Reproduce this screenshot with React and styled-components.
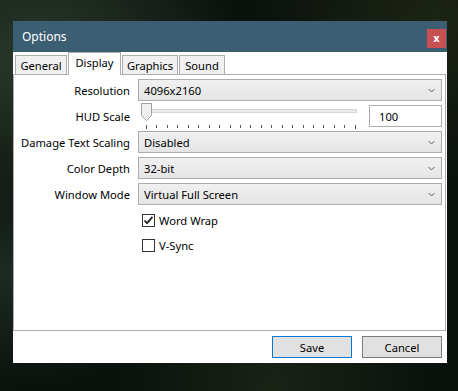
import styled, { createGlobalStyle } from 'styled-components'

const GlobalStyle = createGlobalStyle`
  body {
    margin: 0;
    font-family: 'Noto Sans', 'Open Sans', sans-serif;
    font-size: 11.2px;
    color: #000;
  }
`

const Page = styled.div`
  width: 458px;
  height: 391px;
  box-sizing: border-box;
  padding: 21px 0 0 13px;
  overflow: hidden;
  background:
    radial-gradient(ellipse at 8% 15%, #2b3a2c 0%, transparent 35%),
    radial-gradient(ellipse at 95% 5%, #1c2414 0%, transparent 30%),
    radial-gradient(ellipse at 60% 100%, #1a2316 0%, transparent 40%),
    radial-gradient(ellipse at 0% 70%, #1e2a24 0%, transparent 30%),
    #0b110d;
`

const Dialog = styled.div`
  width: 434px;
  height: 342px;
  background: #fff;
  display: flex;
  flex-direction: column;
`

const TitleBar = styled.div`
  height: 31px;
  flex: none;
  background: #3b5e72;
  display: flex;
  align-items: center;
  justify-content: space-between;
  padding: 0 1px 0 9px;
`

const Title = styled.span`
  color: #fff;
  font-size: 12px;
`

const CloseButton = styled.div`
  width: 19px;
  height: 19px;
  margin-top: 4px;
  background: #c75050;
  color: #fff;
  font-family: 'DejaVu Sans', sans-serif;
  font-weight: bold;
  font-size: 10px;
  display: flex;
  align-items: center;
  justify-content: center;
`

const TabRow = styled.div`
  height: 23px;
  flex: none;
  display: flex;
  align-items: flex-end;
  padding-left: 2px;
  margin-bottom: -1px;
  position: relative;
  z-index: 1;
`

const Tab = styled.div`
  box-sizing: border-box;
  width: ${p => p.$w}px;
  height: ${p => (p.$active ? 23 : 19)}px;
  margin-bottom: ${p => (p.$active ? 0 : 1)}px;
  margin-right: 1px;
  border: 1px solid #adadad;
  border-bottom: none;
  background: ${p => (p.$active ? '#fff' : '#f0f0f0')};
  display: flex;
  align-items: ${p => (p.$active ? 'flex-start' : 'center')};
  padding-top: ${p => (p.$active ? 2 : 0)}px;
  justify-content: center;
`

const Panel = styled.div`
  flex: 1;
  border: 1px solid #adadad;
  margin-right: 1px;
  padding-top: 4px;
`

const Form = styled.div`
  display: grid;
  grid-template-columns: 116px 304px;
  grid-auto-rows: 22px;
  column-gap: 8px;
  row-gap: 4px;
`

const Label = styled.div`
  display: flex;
  align-items: center;
  justify-content: flex-end;
  white-space: nowrap;
`

const Select = styled.div`
  box-sizing: border-box;
  height: 22px;
  border: 1px solid #acacac;
  background: linear-gradient(#f0f0f0, #e5e5e5);
  display: flex;
  align-items: center;
  justify-content: space-between;
  padding: 0 6px 0 5px;
`

const SliderRow = styled.div`
  display: flex;
  align-items: flex-start;
  justify-content: space-between;
`

const Slider = styled.div`
  position: relative;
  width: 219px;
  height: 22px;
`

const Track = styled.div`
  margin: 4px 0 0 3px;
  height: 2px;
  border: 1px solid #d6d6d6;
  background: #e7eae9;
`

const Ticks = styled.div`
  display: flex;
  justify-content: space-between;
  margin: 12px 0 0 8px;
  padding-right: 1px;
`

const Tick = styled.div`
  width: 1px;
  height: ${p => (p.$long ? 4 : 3)}px;
  background: #555;
`

const Thumb = styled.svg`
  position: absolute;
  left: 3px;
  top: -2px;
`

const NumberBox = styled.div`
  box-sizing: border-box;
  width: 73px;
  height: 22px;
  border: 1px solid #adadad;
  background: #fff;
  display: flex;
  align-items: center;
  padding-left: 9px;
`

const CheckList = styled.div`
  grid-column: 2;
  display: flex;
  flex-direction: column;
  gap: 3px;
`

const CheckRow = styled.div`
  flex: none;
  height: 22px;
  display: flex;
  align-items: center;
  gap: 4px;
  padding-left: 4px;
`

const Box = styled.div`
  box-sizing: border-box;
  width: 13px;
  height: 13px;
  border: 1px solid #333;
  background: #fff;
  display: flex;
  align-items: center;
  justify-content: center;
`

const Footer = styled.div`
  height: 32px;
  flex: none;
  box-sizing: border-box;
  display: flex;
  justify-content: flex-end;
  align-items: flex-start;
  gap: 10px;
  padding: 5px 5px 0 0;
`

const Button = styled.div`
  box-sizing: border-box;
  width: 80px;
  height: 22px;
  background: #e1e1e1;
  border: 1px solid ${p => (p.$primary ? '#0078d7' : '#7a7a7a')};
  display: flex;
  align-items: center;
  justify-content: center;
`

function Chevron() {
  return (
    <svg width="7" height="5" viewBox="0 0 7 5">
      <path d="M0.5 1 L3.5 4 L6.5 1" fill="none" stroke="#606060" strokeWidth="1" />
    </svg>
  )
}

function Check() {
  return (
    <svg width="11" height="11" viewBox="0 0 11 11">
      <path d="M1.5 5.5 L4 8.2 L9.5 1.8" fill="none" stroke="#222" strokeWidth="1.8" />
    </svg>
  )
}

const selects = [
  ['Resolution', '4096x2160'],
  null,
  ['Damage Text Scaling', 'Disabled'],
  ['Color Depth', '32-bit'],
  ['Window Mode', 'Virtual Full Screen'],
]

export default function App() {
  return (
    <Page>
      <GlobalStyle />
      <Dialog>
        <TitleBar>
          <Title>Options</Title>
          <CloseButton>x</CloseButton>
        </TitleBar>
        <TabRow>
          <Tab $w={52}>General</Tab>
          <Tab $w={53} $active>Display</Tab>
          <Tab $w={56}>Graphics</Tab>
          <Tab $w={46}>Sound</Tab>
        </TabRow>
        <Panel>
          <Form>
            {selects.map((row, i) =>
              row ? (
                [
                  <Label key={'l' + i}>{row[0]}</Label>,
                  <Select key={'s' + i}>
                    <span>{row[1]}</span>
                    <Chevron />
                  </Select>,
                ]
              ) : (
                [
                  <Label key="hl">HUD Scale</Label>,
                  <SliderRow key="hs">
                    <Slider>
                      <Track />
                      <Ticks>
                        {Array.from({ length: 21 }, (_, t) => (
                          <Tick key={t} $long={t === 0 || t === 20} />
                        ))}
                      </Ticks>
                      <Thumb width="11" height="18" viewBox="0 0 11 18">
                        <path d="M0.5 0.5 H10.5 V12.5 L5.5 17.5 L0.5 12.5 Z" fill="#f0f0f0" stroke="#a0a0a0" />
                      </Thumb>
                    </Slider>
                    <NumberBox>100</NumberBox>
                  </SliderRow>,
                ]
              )
            )}
            <CheckList>
              <CheckRow>
                <Box><Check /></Box>
                Word Wrap
              </CheckRow>
              <CheckRow>
                <Box />
                V-Sync
              </CheckRow>
            </CheckList>
          </Form>
        </Panel>
        <Footer>
          <Button $primary>Save</Button>
          <Button>Cancel</Button>
        </Footer>
      </Dialog>
    </Page>
  )
}
